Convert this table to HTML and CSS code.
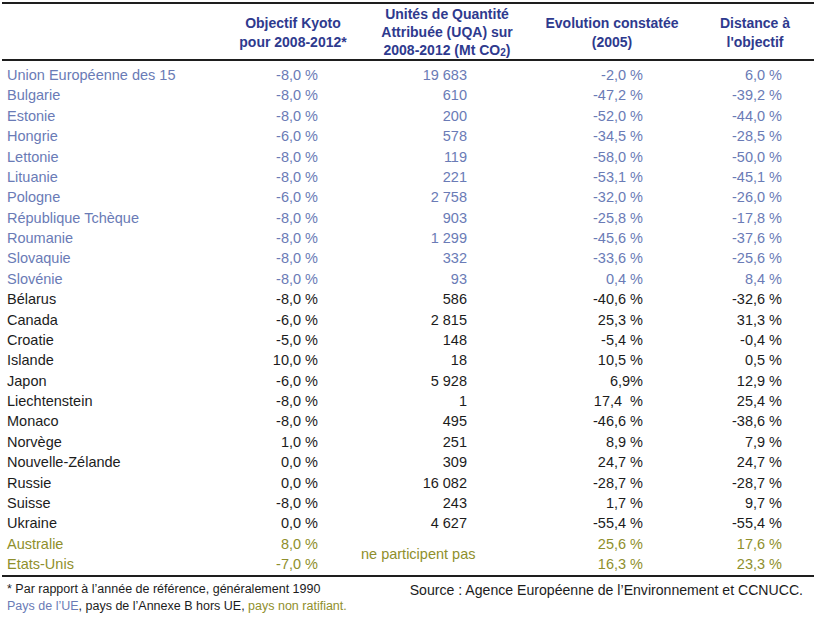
FILE: index.html
```html
<!DOCTYPE html>
<html lang="fr">
<head>
<meta charset="utf-8">
<title>Objectifs Kyoto</title>
<link rel="stylesheet" href="styles.css">
</head>
<body>
<div class="page">
  <table class="kyoto">
    <colgroup>
      <col class="c-name">
      <col class="c-obj">
      <col class="c-uqa">
      <col class="c-evo">
      <col class="c-dist">
    </colgroup>
    <thead>
      <tr>
        <th></th>
        <th class="h2">Objectif Kyoto<br>pour 2008-2012*</th>
        <th>Unités de Quantité<br>Attribuée (UQA) sur<br>2008-2012 (Mt CO<span class="sub">2</span>)</th>
        <th class="h2">Evolution constatée<br>(2005)</th>
        <th class="h2 h-dist">Distance à<br>l'objectif</th>
      </tr>
    </thead>
    <tbody>
      <tr class="eu first"><td>Union Européenne des 15</td><td>-8,0 %</td><td>19 683</td><td>-2,0 %</td><td>6,0 %</td></tr>
      <tr class="eu"><td>Bulgarie</td><td>-8,0 %</td><td>610</td><td>-47,2 %</td><td>-39,2 %</td></tr>
      <tr class="eu"><td>Estonie</td><td>-8,0 %</td><td>200</td><td>-52,0 %</td><td>-44,0 %</td></tr>
      <tr class="eu"><td>Hongrie</td><td>-6,0 %</td><td>578</td><td>-34,5 %</td><td>-28,5 %</td></tr>
      <tr class="eu"><td>Lettonie</td><td>-8,0 %</td><td>119</td><td>-58,0 %</td><td>-50,0 %</td></tr>
      <tr class="eu"><td>Lituanie</td><td>-8,0 %</td><td>221</td><td>-53,1 %</td><td>-45,1 %</td></tr>
      <tr class="eu"><td>Pologne</td><td>-6,0 %</td><td>2 758</td><td>-32,0 %</td><td>-26,0 %</td></tr>
      <tr class="eu"><td>République Tchèque</td><td>-8,0 %</td><td>903</td><td>-25,8 %</td><td>-17,8 %</td></tr>
      <tr class="eu"><td>Roumanie</td><td>-8,0 %</td><td>1 299</td><td>-45,6 %</td><td>-37,6 %</td></tr>
      <tr class="eu"><td>Slovaquie</td><td>-8,0 %</td><td>332</td><td>-33,6 %</td><td>-25,6 %</td></tr>
      <tr class="eu"><td>Slovénie</td><td>-8,0 %</td><td>93</td><td>0,4 %</td><td>8,4 %</td></tr>
      <tr class="ann"><td>Bélarus</td><td>-8,0 %</td><td>586</td><td>-40,6 %</td><td>-32,6 %</td></tr>
      <tr class="ann"><td>Canada</td><td>-6,0 %</td><td>2 815</td><td>25,3 %</td><td>31,3 %</td></tr>
      <tr class="ann"><td>Croatie</td><td>-5,0 %</td><td>148</td><td>-5,4 %</td><td>-0,4 %</td></tr>
      <tr class="ann"><td>Islande</td><td>10,0 %</td><td>18</td><td>10,5 %</td><td>0,5 %</td></tr>
      <tr class="ann"><td>Japon</td><td>-6,0 %</td><td>5 928</td><td>6,9%</td><td>12,9 %</td></tr>
      <tr class="ann"><td>Liechtenstein</td><td>-8,0 %</td><td>1</td><td class="shift">17,4 &nbsp;%</td><td>25,4 %</td></tr>
      <tr class="ann"><td>Monaco</td><td>-8,0 %</td><td>495</td><td>-46,6 %</td><td>-38,6 %</td></tr>
      <tr class="ann"><td>Norvège</td><td>1,0 %</td><td>251</td><td>8,9 %</td><td>7,9 %</td></tr>
      <tr class="ann"><td>Nouvelle-Zélande</td><td>0,0 %</td><td>309</td><td>24,7 %</td><td>24,7 %</td></tr>
      <tr class="ann"><td>Russie</td><td>0,0 %</td><td>16 082</td><td>-28,7 %</td><td>-28,7 %</td></tr>
      <tr class="ann"><td>Suisse</td><td>-8,0 %</td><td>243</td><td>1,7 %</td><td>9,7 %</td></tr>
      <tr class="ann"><td>Ukraine</td><td>0,0 %</td><td>4 627</td><td>-55,4 %</td><td>-55,4 %</td></tr>
      <tr class="nr"><td>Australie</td><td>8,0 %</td><td class="np" rowspan="2">ne participent pas</td><td>25,6 %</td><td>17,6 %</td></tr>
      <tr class="nr last"><td>Etats-Unis</td><td>-7,0 %</td><td>16,3 %</td><td>23,3 %</td></tr>
    </tbody>
  </table>
  <div class="notes">
    <div class="legend">
      <p>* Par rapport à l’année de référence, généralement 1990</p>
      <p><span class="t-eu">Pays de l’UE</span>, pays de l’Annexe B hors UE, <span class="t-nr">pays non ratifiant.</span></p>
    </div>
    <p class="source">Source : Agence Européenne de l’Environnement et CCNUCC.</p>
  </div>
</div>
</body>
</html>
```

FILE: styles.css
```css
html, body {
  margin: 0;
  padding: 0;
  background: #ffffff;
}

.page {
  padding: 2px 0 0 2px;
  width: 812px;
  font-family: "Liberation Sans", Arial, sans-serif;
  color: #1c1c1c;
}

.kyoto {
  width: 812px;
  table-layout: fixed;
  border-collapse: collapse;
  border-top: 2px solid #1e1e1e;
  border-bottom: 2px solid #1e1e1e;
  font-size: 14.5px;
}

.c-name { width: 223px; }
.c-obj { width: 136px; }
.c-uqa { width: 172px; }
.c-evo { width: 158px; }
.c-dist { width: 123px; }

.kyoto thead tr {
  border-bottom: 2px solid #1e1e1e;
}

.kyoto th {
  height: 55px;
  padding: 0;
  font-size: 14px;
  font-weight: bold;
  line-height: 18px;
  color: #2e3a8e;
  text-align: center;
  vertical-align: middle;
}

.kyoto th.h2 {
  height: 52px;
  padding-top: 3px;
  line-height: 19px;
}

.kyoto th.h-dist {
  padding-left: 5px;
}

.sub {
  font-size: 10px;
  line-height: 0;
  vertical-align: -1px;
}

.kyoto td {
  padding: 0;
  line-height: 20.375px;
  height: 20.375px;
  text-align: right;
  white-space: nowrap;
  vertical-align: middle;
}

.kyoto td:nth-child(1) {
  text-align: left;
  padding-left: 5px;
}

.kyoto tr td:nth-child(2) { padding-right: 43px; }
.kyoto tr td:nth-child(3) { padding-right: 66px; }
.kyoto tr td:nth-child(4) { padding-right: 48px; }
.kyoto tr td:nth-child(5) { padding-right: 32px; }

.kyoto tr.nr.last td:nth-child(3) { padding-right: 48px; }
.kyoto tr.nr.last td:nth-child(4) { padding-right: 32px; }

.kyoto td.shift {
  padding-right: 44px;
}

.kyoto tr.first td {
  padding-top: 4px;
}

.kyoto tr.last td {
  padding-bottom: 1px;
}

.kyoto td.np {
  text-align: center;
  padding-right: 0;
  padding-left: 0;
}

.eu { color: #6a7bb6; }
.ann { color: #1c1c1c; }
.nr { color: #8f8f2c; }

.notes {
  display: flex;
  justify-content: space-between;
  align-items: flex-start;
  font-size: 12.5px;
  line-height: 17px;
}

.notes p {
  margin: 0;
}

.legend {
  padding: 4px 0 0 5px;
}

.source {
  padding: 5px 11px 0 0;
  font-size: 14.1px;
}

.t-eu { color: #6a7bb6; }
.t-nr { color: #8f8f2c; }
```
